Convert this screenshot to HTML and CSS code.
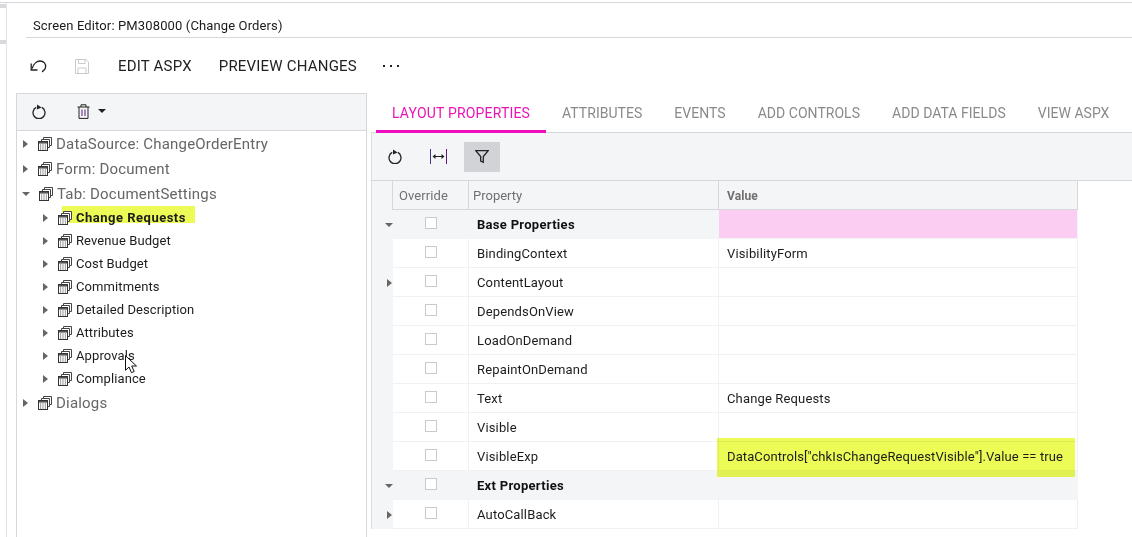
FILE: index.html
```html
<!DOCTYPE html>
<html lang="en">
<head>
<meta charset="utf-8">
<title>Screen Editor</title>
<link rel="stylesheet" href="styles.css">
</head>
<body>
<svg class="sprite" aria-hidden="true">
  <symbol id="node" viewBox="0 0 14 14">
    <path d="M5.5 2.5V.5h8v8h-2M3.5 4.5v-2h8v8h-2" fill="#fff" stroke="#444" stroke-width="1"/>
    <rect x=".5" y="4.5" width="9" height="9" fill="#fff" stroke="#333"/>
    <rect x="1" y="5" width="8" height="1.6" fill="#555"/>
    <path d="M2 8h1.2M4.4 8h1.2M6.8 8h1.2M2 10h1.2M4.4 10h1.2M6.8 10h1.2M2 12h1.2M4.4 12h1.2M6.8 12h1.2" stroke="#555" stroke-width="1"/>
  </symbol>
  <symbol id="reload" viewBox="0 0 14 15">
    <path d="M4.2 3.4a6 6 0 1 0 5.6 0" fill="none" stroke="#222" stroke-width="1.3"/>
    <path d="M5 .4l4.600 3.200L5 5.400z" fill="#222"/>
  </symbol>
  <symbol id="box" viewBox="0 0 13 13">
    <rect x="1.5" y=".5" width="11" height="11" fill="#fff" stroke="#c9cace"/>
  </symbol>
</svg>

<div class="top-line"></div>
<div class="page">
  <div class="rail"><div class="stub"></div><div class="stub stub-low"></div></div>
  <main class="main">
    <h1 class="title">Screen Editor: PM308000 (Change Orders)</h1>
    <div class="toolbar">
      <svg class="ic-undo" width="17" height="14" viewBox="0 0 17 14"><path d="M2.200 9.500C3.500 4.500 7 2 10 2c4 0 6 3 5.600 6-.3 2.200-1.700 3.800-3.600 4.800" fill="none" stroke="#222" stroke-width="1.300"/><path d="M1.200 4.500v6.500h6.300" fill="none" stroke="#222" stroke-width="1.300"/></svg>
      <svg class="ic-save" width="14" height="15" viewBox="0 0 14 15"><path d="M.5.5h10.600l2.400 2.400v11.600H.5z M3.500.5v4h6.500v-4 M3 14.500V9h8v5.500" fill="#fff" stroke="#c9cace"/></svg>
      <span class="tool-text edit">EDIT ASPX</span>
      <span class="tool-text preview">PREVIEW CHANGES</span>
      <span class="dots"><i></i><i></i><i></i></span>
    </div>
    <div class="split">
      <section class="tree-panel">
        <div class="tree-head">
          <svg class="ic-reload" width="14" height="15"><use href="#reload"/></svg>
          <svg class="ic-trash" width="13" height="15" viewBox="0 0 13 15"><path d="M.5 3h12M4 3V.8h5V3M2 3v11.400h9V3" fill="none" stroke="#222"/><path d="M5 5.500v6.500M8 5.500v6.500" stroke="#5a1a80"/></svg>
          <span class="caret-down dark"></span>
        </div>
        <ul class="tree">
          <li class="top"><span class="caret-right"></span><svg class="node"><use href="#node"/></svg>DataSource: ChangeOrderEntry</li>
          <li class="top"><span class="caret-right"></span><svg class="node"><use href="#node"/></svg>Form: Document</li>
          <li class="top"><span class="caret-down"></span><svg class="node"><use href="#node"/></svg>Tab: DocumentSettings</li>
          <li class="sub selected"><span class="mark"></span><span class="caret-right"></span><svg class="node"><use href="#node"/></svg>Change Requests</li>
          <li class="sub"><span class="caret-right"></span><svg class="node"><use href="#node"/></svg>Revenue Budget</li>
          <li class="sub"><span class="caret-right"></span><svg class="node"><use href="#node"/></svg>Cost Budget</li>
          <li class="sub"><span class="caret-right"></span><svg class="node"><use href="#node"/></svg>Commitments</li>
          <li class="sub"><span class="caret-right"></span><svg class="node"><use href="#node"/></svg>Detailed Description</li>
          <li class="sub"><span class="caret-right"></span><svg class="node"><use href="#node"/></svg>Attributes</li>
          <li class="sub"><span class="caret-right"></span><svg class="node"><use href="#node"/></svg>Approvals
            <svg class="cursor" width="13" height="19" viewBox="0 0 13 19"><path d="M.5.700v14.600l3.500-3.300 2.500 5.700 2.700-1.200-2.500-5.500h4.800z" fill="#fff" stroke="#111"/></svg>
          </li>
          <li class="sub"><span class="caret-right"></span><svg class="node"><use href="#node"/></svg>Compliance</li>
          <li class="top last"><span class="caret-right"></span><svg class="node"><use href="#node"/></svg>Dialogs</li>
        </ul>
      </section>
      <section class="props">
        <nav class="tabs">
          <span class="tab active">LAYOUT PROPERTIES</span>
          <span class="tab">ATTRIBUTES</span>
          <span class="tab">EVENTS</span>
          <span class="tab">ADD CONTROLS</span>
          <span class="tab">ADD DATA FIELDS</span>
          <span class="tab">VIEW ASPX</span>
        </nav>
        <div class="prop-bar">
          <svg class="ic-reload" width="14" height="15"><use href="#reload"/></svg>
          <svg class="ic-fit" width="17" height="15" viewBox="0 0 17 15"><path d="M.5 0v15" stroke="#3a3a8a"/><path d="M16.500 0v15" stroke="#5a1a80"/><path d="M3 7.500h11" stroke="#222"/><path d="M5.500 5l-3 2.500 3 2.500zM11.500 5l3 2.500-3 2.500z" fill="#222"/></svg>
          <span class="filter-btn"><svg width="14" height="13" viewBox="0 0 14 13"><path d="M.8.700h12.400L8.300 6.500v5.800L5.700 11V6.500z" fill="none" stroke="#222" stroke-width="1.300"/></svg></span>
        </div>
        <div class="grid">
          <div class="row head"><div class="c0"></div><div class="c1">Override</div><div class="c2">Property</div><div class="c3 bold">Value</div></div>
          <div class="row group"><div class="c0"><span class="caret-down"></span></div><div class="c1"><svg class="box"><use href="#box"/></svg></div><div class="c2">Base Properties</div><div class="c3 pink"></div></div>
          <div class="row"><div class="c0"></div><div class="c1"><svg class="box"><use href="#box"/></svg></div><div class="c2">BindingContext</div><div class="c3">VisibilityForm</div></div>
          <div class="row"><div class="c0"><span class="caret-right"></span></div><div class="c1"><svg class="box"><use href="#box"/></svg></div><div class="c2">ContentLayout</div><div class="c3"></div></div>
          <div class="row"><div class="c0"></div><div class="c1"><svg class="box"><use href="#box"/></svg></div><div class="c2">DependsOnView</div><div class="c3"></div></div>
          <div class="row"><div class="c0"></div><div class="c1"><svg class="box"><use href="#box"/></svg></div><div class="c2">LoadOnDemand</div><div class="c3"></div></div>
          <div class="row"><div class="c0"></div><div class="c1"><svg class="box"><use href="#box"/></svg></div><div class="c2">RepaintOnDemand</div><div class="c3"></div></div>
          <div class="row"><div class="c0"></div><div class="c1"><svg class="box"><use href="#box"/></svg></div><div class="c2">Text</div><div class="c3">Change Requests</div></div>
          <div class="row"><div class="c0"></div><div class="c1"><svg class="box"><use href="#box"/></svg></div><div class="c2">Visible</div><div class="c3"></div></div>
          <div class="row"><div class="c0"></div><div class="c1"><svg class="box"><use href="#box"/></svg></div><div class="c2">VisibleExp</div><div class="c3"><span class="mark-value"></span><span class="value-text">DataControls["chkIsChangeRequestVisible"].Value == true</span></div></div>
          <div class="row group"><div class="c0"><span class="caret-down"></span></div><div class="c1"><svg class="box"><use href="#box"/></svg></div><div class="c2">Ext Properties</div><div class="c3"></div></div>
          <div class="row"><div class="c0"><span class="caret-right"></span></div><div class="c1"><svg class="box"><use href="#box"/></svg></div><div class="c2">AutoCallBack</div><div class="c3"></div></div>
        </div>
      </section>
    </div>
  </main>
</div>
</body>
</html>
```
FILE: styles.css
```css
* { box-sizing: border-box; }
html, body { margin: 0; padding: 0; }
body {
  width: 1132px;
  height: 537px;
  overflow: hidden;
  background: #fff;
  color: #111;
  font-family: Roboto, "Liberation Sans", sans-serif;
}
.sprite { width: 0; height: 0; display: block; }
.top-line { height: 3px; border-bottom: 1px solid #d6d7db; }
.page { display: flex; height: 534px; }
.rail { width: 7px; flex: none; border-right: 1px solid #e2e3e6; padding-top: 1px; }
.stub { height: 4px; background: #d8d9dc; }
.stub-low { margin-top: 32px; }
.main { flex: 1; min-width: 0; }

.title {
  margin: 0 0 0 19px;
  height: 35px;
  padding: 15px 0 0 7px;
  font-size: 13px;
  line-height: 16px;
  font-weight: 400;
  letter-spacing: .13px;
  color: #1a1a1a;
  border-bottom: 1px solid #d6d7db;
}
.toolbar {
  display: flex;
  align-items: center;
  height: 55px;
  padding-top: 1px;
  font-size: 15px;
  letter-spacing: .2px;
  color: #222;
}
.ic-undo { margin-left: 23px; }
.ic-save { margin-left: 28px; }
.edit { margin-left: 29px; }
.preview { margin-left: 27px; }
.dots { margin-left: 26px; display: flex; gap: 5px; margin-bottom: 1px; }
.dots i { width: 2px; height: 2px; background: #222; display: block; }

.split { display: flex; height: 444px; }
.tree-panel {
  margin-left: 9px;
  width: 351px;
  flex: none;
  border-left: 1px solid #d6d7db;
  border-right: 1px solid #d6d7db;
  border-top: 1px solid #d6d7db;
}
.tree-head {
  height: 37px;
  background: #f4f5f7;
  border-bottom: 1px solid #d6d7db;
  display: flex;
  align-items: center;
  padding: 0 0 1px 15px;
}
.tree-head .ic-trash { margin-left: 31px; }
.tree-head .caret-down { margin-left: 8px; margin-bottom: 2px; }
.tree { list-style: none; margin: 0; padding: 0; }
.tree li { display: flex; align-items: center; position: relative; }
.tree .top {
  height: 25px;
  padding: 0 0 1px 6px;
  font-size: 15px;
  letter-spacing: .2px;
  color: #666;
}
.tree .top:first-child { margin-top: 1px; }
.tree .sub {
  height: 23px;
  padding-left: 26px;
  font-size: 13px;
  letter-spacing: .1px;
  color: #1c1c1c;
}
.tree .sub.selected { font-weight: 700; letter-spacing: .5px; margin-top: -1px; isolation: isolate; }
.tree .top.last { margin-top: 1px; }
.node { width: 14px; height: 14px; margin: 0 4px 0 10px; flex: none; position: relative; }
.tree li .caret-right, .tree li .caret-down { position: relative; flex: none; }
.tree .top .caret-down { margin-right: -1px; margin-left: -1px; }
.mark {
  position: absolute;
  left: 45px;
  top: 0;
  width: 133px;
  height: 17px;
  background: #ecfb56;
  z-index: -1;
}
.cursor { position: absolute; left: 108px; top: 11px; }

.caret-right {
  display: inline-block;
  width: 0; height: 0;
  border-left: 5px solid #666;
  border-top: 4px solid transparent;
  border-bottom: 4px solid transparent;
}
.caret-down {
  display: inline-block;
  width: 0; height: 0;
  border-top: 4px solid #666;
  border-left: 4px solid transparent;
  border-right: 4px solid transparent;
}
.caret-down.dark { border-top-color: #222; }

.props { margin-left: 4px; flex: 1; min-width: 0; display: flex; flex-direction: column; }
.tabs {
  display: flex;
  flex: none;
  height: 40px;
  padding-left: 5px;
  border-bottom: 1px solid #d6d7db;
  font-size: 14px;
  letter-spacing: .03px;
  color: #8a8a8a;
}
.tab { padding: 12px 16px 0; line-height: 17px; }
.tab.active { color: #ea14b5; border-bottom: 3px solid #f20cc0; margin-bottom: -1px; letter-spacing: .18px; }
.prop-bar {
  flex: none;
  height: 48px;
  background: #f4f5f7;
  border-left: 1px solid #dcdde0;
  border-bottom: 1px solid #d6d7db;
  display: flex;
  align-items: center;
  padding-left: 16px;
}
.prop-bar .ic-fit { margin-left: 28px; }
.filter-btn {
  margin-left: 17px;
  width: 36px;
  height: 30px;
  background: #d2d3d6;
  display: flex;
  align-items: center;
  justify-content: center;
}
.grid { border-left: 1px solid #dcdde0; width: 707px; }
.row {
  display: grid;
  grid-template-columns: 21px 76px 250px 1fr;
  height: 29px;
  font-size: 13px;
  letter-spacing: .15px;
  color: #1c1c1c;
}
.row > div { display: flex; align-items: center; border-bottom: 1px solid #f1f1f3; }
.c0 { background: #f4f5f7; padding-left: 15px; border-bottom: 0 !important; }
.c0 .caret-down { margin-left: -2px; }
.c1 { justify-content: center; border-right: 1px solid #f1f1f3; }
.c2 { padding-left: 8px; border-right: 1px solid #f1f1f3; }
.c3 { padding-left: 8px; position: relative; border-right: 1px solid #f1f1f3; }
.box { width: 13px; height: 13px; margin: 0 1px 2px 0; }
.row.head { background: #f4f5f7; font-size: 13px; letter-spacing: 0; color: #707070; }
.row.head > div { border-right: 1px solid #d6d7db; border-bottom: 1px solid #d6d7db; padding: 1px 0 0 4px; justify-content: flex-start; }
.row.head .c1 { padding-left: 6px; letter-spacing: .1px; }
.row.head .c3 { padding-left: 8px; font-size: 12px; letter-spacing: .1px; }
.bold { font-weight: 700; }
.row.group { background: #f4f5f7; font-weight: 700; color: #111; letter-spacing: .3px; }
.row.group > div { border-color: #f4f5f7; }
.row.group .c3.pink { background: #fbcdf3; }
.mark-value {
  position: absolute;
  left: -2px;
  top: -4px;
  width: 358px;
  height: 39px;
  background: #ecfb56;
  mix-blend-mode: multiply;
}
.value-text { position: relative; letter-spacing: .1px; }
```
